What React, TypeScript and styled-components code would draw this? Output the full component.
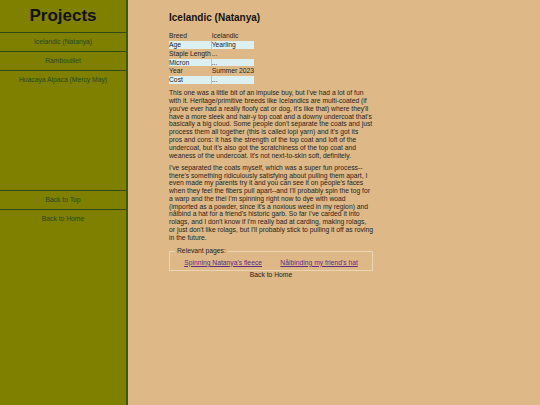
import React from 'react';
import styled, { createGlobalStyle } from 'styled-components';

type Row = { label: string; value: string };

const details: Row[] = [
	{ label: 'Breed', value: 'Icelandic' },
	{ label: 'Age', value: 'Yearling' },
	{ label: 'Staple Length', value: '...' },
	{ label: 'Micron', value: '...' },
	{ label: 'Year', value: 'Summer 2023' },
	{ label: 'Cost', value: '...' }
];

const projects = ['Icelandic (Natanya)', 'Rambouillet', 'Huacaya Alpaca (Mercy May)'];

const GlobalStyle = createGlobalStyle`
	html, body {
		margin: 0;
		padding: 0;
		height: 100%;
	}
	body {
		font-family: "Liberation Sans", Arial, sans-serif;
		font-size: 6.75px;
		background-color: #deb887;
		color: #262320;
	}
`;

const App: React.FC = () => {
	return (
		<>
			<GlobalStyle />
			<Page>
				<Sidebar>
					<SideTitle>Projects</SideTitle>
					<NavGroup>
						{projects.map(p => (
							<NavItem key={p} href="#">
								{p}
							</NavItem>
						))}
					</NavGroup>
					<NavGroup $bottom>
						<NavItem href="#">Back to Top</NavItem>
						<NavItem href="#">Back to Home</NavItem>
					</NavGroup>
				</Sidebar>
				<Main>
					<Content>
						<Title>Icelandic (Natanya)</Title>
						<Details>
							<tbody>
								{details.map((row, i) => (
									<tr key={row.label}>
										<Cell $shaded={i % 2 === 1}>{row.label}</Cell>
										<Cell $shaded={i % 2 === 1}>{row.value}</Cell>
									</tr>
								))}
							</tbody>
						</Details>
						<Paragraph>
							This one was a little bit of an impulse buy, but I've had a lot of fun with it.
							Heritage/primitive breeds like Icelandics are multi-coated (if you've ever had a
							really floofy cat or dog, it's like that) where they'll have a more sleek and hair-y
							top coat and a downy undercoat that's basically a big cloud. Some people don't
							separate the coats and just process them all together (this is called lopi yarn) and
							it's got its pros and cons: it has the strength of the top coat and loft of the
							undercoat, but it's also got the scratchiness of the top coat and weaness of the
							undercoat. It's not next-to-skin soft, definitely.
						</Paragraph>
						<Paragraph>
							I've separated the coats myself, which was a super fun process--there's something
							ridiculously satisfying about pulling them apart, I even made my parents try it and
							you can see it on people's faces when they feel the fibers pull apart--and I'll
							probably spin the tog for a warp and the thel I'm spinning right now to dye with woad
							(imported as a powder, since it's a noxious weed in my region) and nålbind a hat for
							a friend's historic garb. So far I've carded it into rolags, and I don't know if I'm
							really bad at carding, making rolags, or just don't like rolags, but I'll probably
							stick to pulling it off as roving in the future.
						</Paragraph>
						<Related>
							<Legend>Relevant pages:</Legend>
							<LinkRow>
								<PageLink href="#">Spinning Natanya's fleece</PageLink>
								<PageLink href="#">Nålbinding my friend's hat</PageLink>
							</LinkRow>
						</Related>
						<HomeLink href="#">Back to Home</HomeLink>
					</Content>
				</Main>
			</Page>
		</>
	);
};

const Page = styled.div`
	display: flex;
	min-height: 100vh;
`;

const Sidebar = styled.nav`
	width: 126px;
	flex-shrink: 0;
	background-color: #808000;
	border-right: 2px solid #3d5a12;
	display: flex;
	flex-direction: column;
`;

const SideTitle = styled.h1`
	margin: 0;
	padding: 5.5px 0 0;
	height: 26.5px;
	text-align: center;
	font-size: 17px;
	font-weight: bold;
	color: #111;
`;

const NavGroup = styled.div<{ $bottom?: boolean }>`
	display: flex;
	flex-direction: column;
	margin-top: ${({ $bottom }) => ($bottom ? '101px' : '0')};
`;

const NavItem = styled.a`
	display: block;
	border-top: 1px solid #2f4a18;
	padding: 4.8px 0 5.4px;
	text-align: center;
	color: #1f4a26;
	text-decoration: none;
	line-height: 7.76px;
`;

const Main = styled.main`
	flex: 1;
	background-color: #deb887;
	padding: 12px 0 0 41px;
`;

const Content = styled.div`
	width: 204px;
`;

const Title = styled.h2`
	margin: 0 0 7.8px;
	font-size: 10px;
	line-height: 11.5px;
	font-weight: bold;
	color: #141210;
`;

const Details = styled.table`
	border-collapse: separate;
	border-spacing: 1px;
	margin-left: -1px;
	font-size: 6.75px;
`;

const Cell = styled.td<{ $shaded: boolean }>`
	padding: 0;
	line-height: 7.76px;
	white-space: nowrap;
	background-color: ${({ $shaded }) => ($shaded ? '#dcf0f2' : 'transparent')};
`;

const Paragraph = styled.p`
	margin: 4.5px 0;
	line-height: 7.76px;
`;

const Related = styled.fieldset`
	margin: 6px 0 0;
	padding: 3.5px 5px 3.5px;
	border: 1px solid #ead6b4;
	min-width: 0;
`;

const Legend = styled.legend`
	padding: 0 2px;
	line-height: 7.76px;
`;

const LinkRow = styled.div`
	display: flex;
	justify-content: space-around;
	line-height: 7.76px;
`;

const PageLink = styled.a`
	color: #5e2a84;
	text-decoration: underline;
`;

const HomeLink = styled.a`
	display: block;
	text-align: center;
	color: #262320;
	text-decoration: none;
	line-height: 7.76px;
`;

export default App;
